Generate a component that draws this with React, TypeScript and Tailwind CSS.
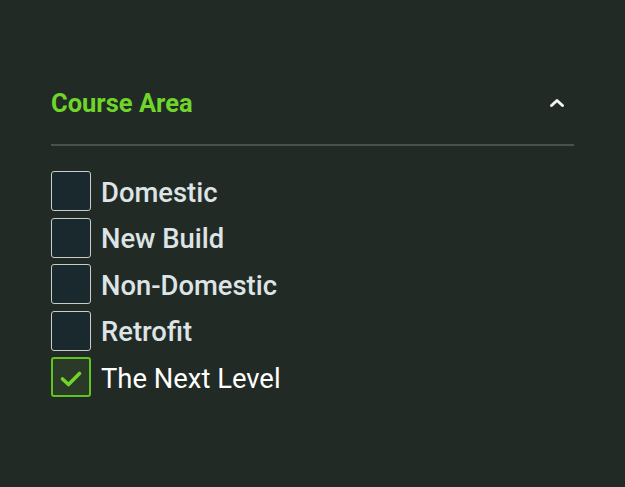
import React, { useState } from 'react';

const areas = ['Domestic', 'New Build', 'Non-Domestic', 'Retrofit', 'The Next Level'];

const App: React.FC = () => {
  const [checked, setChecked] = useState<string[]>(['The Next Level']);

  const toggle = (name: string) =>
    setChecked((prev) => (prev.includes(name) ? prev.filter((n) => n !== name) : [...prev, name]));

  return (
    <div className="min-h-[487px] w-full bg-[#222a25] pt-[88px] pl-[51px] pr-[51px]" style={{ fontFamily: 'Roboto, sans-serif' }}>
      {/* Header */}
      <div className="flex items-center justify-between h-[30px]">
        <h3 className="text-[25.5px] leading-[30px] font-bold text-[#6fd52a]">Course Area</h3>
        <svg width="16" height="10" viewBox="0 0 16 10" className="mr-[9px]">
          <path d="M2.5 7.5 L8 2.5 L13.5 7.5" fill="none" stroke="#f3f4f0" strokeWidth="3" strokeLinecap="round" strokeLinejoin="round" />
        </svg>
      </div>
      <div className="mt-[26px] h-[2px] bg-[#47524f]" />

      {/* Options */}
      <div className="mt-[25px] flex flex-col gap-[6.5px]">
        {areas.map((name) => {
          const on = checked.includes(name);
          return (
            <label key={name} className="flex items-center gap-[10px] cursor-pointer" onClick={() => toggle(name)}>
              <span
                className={
                  on
                    ? 'flex h-[40px] w-[40px] shrink-0 items-center justify-center rounded-[3px] border-2 border-[#5fc41e] bg-[#2b3a28]'
                    : 'flex h-[40px] w-[40px] shrink-0 items-center justify-center rounded-[3px] border-[1.5px] border-[#c9cdc9] bg-[#19292d]'
                }
              >
                {on && (
                  <svg width="24" height="18" viewBox="0 0 24 18" className="mt-[4px]">
                    <path d="M3.5 9 L9.5 14.5 L20.5 3.5" fill="none" stroke="#6fd52a" strokeWidth="3.6" strokeLinecap="round" strokeLinejoin="round" />
                  </svg>
                )}
              </span>
              <span className={on ? 'mt-[3px] text-[27.4px] leading-[32px] text-white' : 'mt-[3px] text-[27.4px] leading-[32px] font-medium text-[#dde4e6]'}>{name}</span>
            </label>
          );
        })}
      </div>
    </div>
  );
};

export default App;
